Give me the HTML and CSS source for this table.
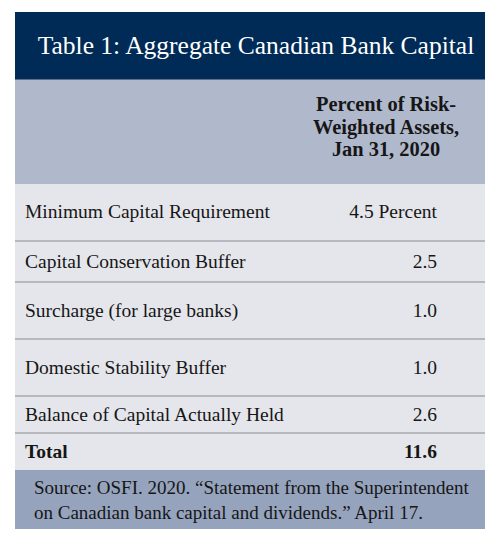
FILE: index.html
```html
<!DOCTYPE html>
<html lang="en">
<head>
    <meta charset="UTF-8">
    <meta name="viewport" content="width=device-width, initial-scale=1.0">
    <title>Aggregate Canadian Bank Capital</title>
    <link rel="stylesheet" href="styles.css">
</head>
<body>
    <div class="figure">
        <h1 class="title">Table 1: Aggregate Canadian Bank Capital</h1>
        <table class="capital">
            <thead>
                <tr>
                    <th class="blank"></th>
                    <th class="col-head">Percent of Risk-<br>Weighted Assets,<br>Jan 31, 2020</th>
                </tr>
            </thead>
            <tbody>
                <tr class="row-tall">
                    <td>Minimum Capital Requirement</td>
                    <td class="num">4.5 Percent</td>
                </tr>
                <tr class="row-mid">
                    <td>Capital Conservation Buffer</td>
                    <td class="num">2.5</td>
                </tr>
                <tr class="row-tall">
                    <td>Surcharge (for large banks)</td>
                    <td class="num">1.0</td>
                </tr>
                <tr class="row-tall">
                    <td>Domestic Stability Buffer</td>
                    <td class="num">1.0</td>
                </tr>
                <tr class="row-short">
                    <td>Balance of Capital Actually Held</td>
                    <td class="num">2.6</td>
                </tr>
                <tr class="row-short total">
                    <td>Total</td>
                    <td class="num">11.6</td>
                </tr>
            </tbody>
        </table>
        <p class="source">Source: OSFI. 2020. “Statement from the Superintendent on Canadian bank capital and dividends.” April 17.</p>
    </div>
</body>
</html>
```

FILE: styles.css
```css
body {
    margin: 0;
    background: #fff;
    font-family: "Liberation Serif", "DejaVu Serif", serif;
    color: #161616;
}
.figure {
    width: 470px;
    margin: 12px 15px 0;
}
.title {
    margin: 0;
    height: 67px;
    padding-left: 12px;
    display: flex;
    align-items: center;
    justify-content: center;
    background: #002b56;
    color: #fff;
    font-weight: normal;
    font-size: 25.5px;
    border-bottom: 1px solid #5d7089;
}
.capital {
    width: 100%;
    border-collapse: collapse;
    font-size: 19.5px;
}
.capital thead tr {
    background: #b0b9cc;
    height: 104px;
}
.col-head {
    width: 198px;
    padding: 13px 0 23px;
    font-size: 20.4px;
    line-height: 22.5px;
    text-align: center;
    vertical-align: top;
}
.capital tbody tr {
    background: #e5e6eb;
    border-top: 2px solid #b7b8bd;
}
.capital thead + tbody tr:first-child {
    border-top: 0;
}
.capital td {
    padding: 0 0 0 10px;
}
.capital td.num {
    text-align: right;
    padding: 0 48px 0 0;
}
.row-tall {
    height: 57px;
}
.row-mid {
    height: 41px;
}
.row-short {
    height: 37px;
}
.total td {
    font-weight: bold;
}
.source {
    margin: 0;
    padding: 5px 14px 4px 19px;
    background: #95a3bd;
    font-size: 19px;
    line-height: 25px;
}
```
